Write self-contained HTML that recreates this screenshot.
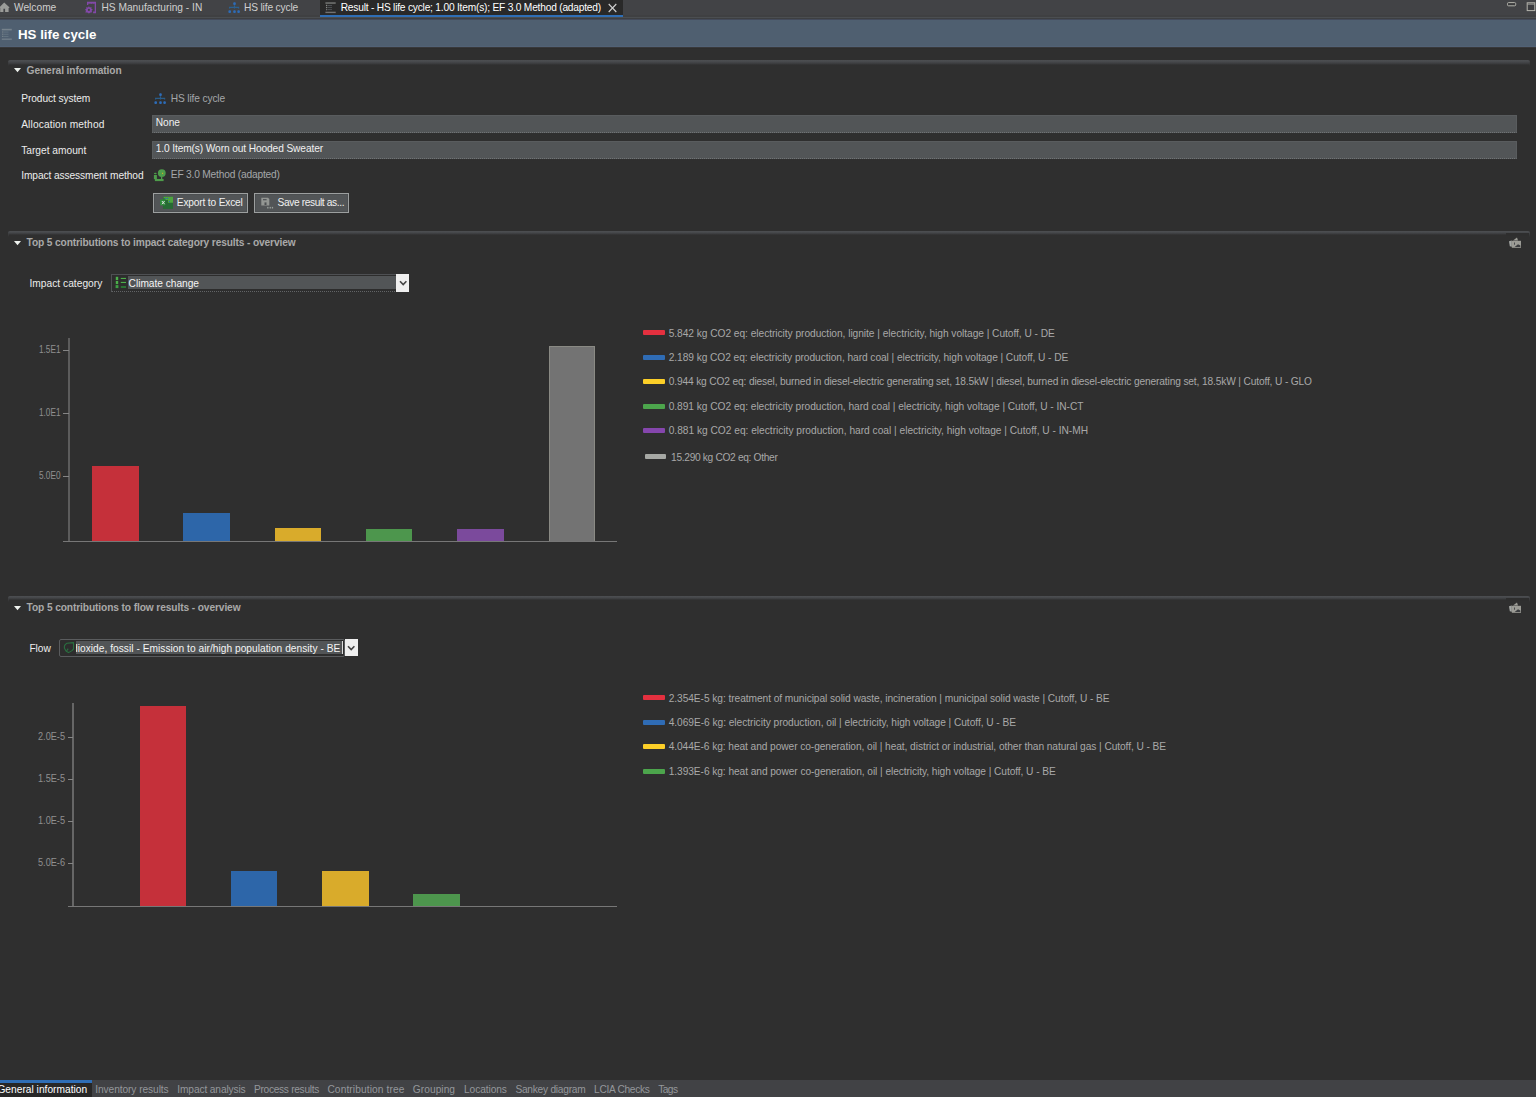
<!DOCTYPE html>
<html><head><meta charset="utf-8"><title>HS life cycle</title>
<style>
html,body{margin:0;padding:0;}
body{width:1536px;height:1097px;overflow:hidden;background:#2f2f2f;position:relative;font-family:"Liberation Sans",sans-serif;}
.a{position:absolute;}
.t{position:absolute;white-space:pre;line-height:1;font-family:"Liberation Sans",sans-serif;}
svg{position:absolute;overflow:visible;}
.secline{position:absolute;left:8px;width:1522px;height:4.6px;border-radius:2px 2px 0 0;background:linear-gradient(#4d4f52,#47494c 35%,#3b3c3e 72%,#2f2f2f);}
.inp{position:absolute;background:#525557;border:1px solid #595c5e;border-bottom:1px dotted #707375;box-sizing:border-box;}
.btn{position:absolute;background:#525557;border:1px solid #9c9f9f;box-sizing:border-box;box-shadow:inset 0 0 0 1px #4b4e50;}
.bar{position:absolute;}
.sw{position:absolute;height:5px;border-radius:1px;}
</style></head><body>
<!-- top tab bar -->
<div class="a" style="left:0;top:0;width:1536px;height:20px;background:#424346;"></div>
<div class="a" style="left:0;top:15px;width:1536px;height:2px;background:#3f4042;"></div>
<div class="a" style="left:0;top:17px;width:1536px;height:1px;background:#4b4e51;"></div>
<div class="a" style="left:0;top:18px;width:1536px;height:1px;background:#3d3f42;"></div>
<div class="a" style="left:0;top:19px;width:1536px;height:1px;background:#434a5a;"></div>
<div class="a" style="left:320px;top:0;width:303px;height:15px;background:#292929;"></div>
<div class="a" style="left:320px;top:15px;width:303px;height:2px;background:#2f6eb6;"></div>
<!-- header -->
<div class="a" style="left:0;top:20px;width:1536px;height:27px;background:#4f5f70;"></div>
<div class="a" style="left:0;top:46px;width:1536px;height:1px;background:#526276;"></div>
<div class="a" style="left:0;top:47px;width:1536px;height:1px;background:#38393b;"></div>
<div class="a" style="left:0;top:48px;width:1536px;height:1px;background:#2d2d2d;"></div>
<!-- sections -->
<div class="secline" style="top:60px;"></div>
<div class="secline" style="top:230.8px;"></div>
<div class="secline" style="top:595.8px;"></div>
<div class="a" style="left:1505.6px;top:233.2px;width:23.2px;height:3px;background:#2e2e2e;"></div>
<div class="a" style="left:1505.6px;top:598.2px;width:23.2px;height:3px;background:#2e2e2e;"></div>
<div class="a" style="left:7.6px;top:61px;width:1.2px;height:5px;background:linear-gradient(#45474a,#2f2f2f);"></div>
<div class="a" style="left:1528.8px;top:61px;width:1.2px;height:5px;background:linear-gradient(#45474a,#2f2f2f);"></div>
<div class="a" style="left:7.6px;top:232px;width:1.2px;height:5px;background:linear-gradient(#45474a,#2f2f2f);"></div>
<div class="a" style="left:1528.8px;top:232px;width:1.2px;height:5px;background:linear-gradient(#45474a,#2f2f2f);"></div>
<div class="a" style="left:7.6px;top:597px;width:1.2px;height:5px;background:linear-gradient(#45474a,#2f2f2f);"></div>
<div class="a" style="left:1528.8px;top:597px;width:1.2px;height:5px;background:linear-gradient(#45474a,#2f2f2f);"></div>
<svg style="left:14px;top:68px" width="7" height="5"><path d="M0 0H7L3.5 4.3Z" fill="#eef2ee"/></svg>
<svg style="left:14px;top:241px" width="7" height="5"><path d="M0 0H7L3.5 4.3Z" fill="#eef2ee"/></svg>
<svg style="left:14px;top:606px" width="7" height="5"><path d="M0 0H7L3.5 4.3Z" fill="#eef2ee"/></svg>
<!-- inputs -->
<div class="inp" style="left:152px;top:115px;width:1365px;height:17.7px;"></div>
<div class="inp" style="left:152px;top:141px;width:1365px;height:17.7px;"></div>
<div class="btn" style="left:153px;top:192.8px;width:94.9px;height:20px;"></div>
<div class="btn" style="left:253.6px;top:192.8px;width:95.6px;height:20px;"></div>
<!-- home -->
<svg style="left:0;top:0" width="12" height="16"><path d="M-0.6 7.4L4.2 2.4L9.6 7.4L8.6 7.9V12H5.1V8.8H3.4V12H0.2V7.9Z" fill="#9b9c99"/></svg>
<!-- process icon purple -->
<svg style="left:82px;top:0" width="16" height="16"><g fill="#8249a8"><path d="M5 1.8H14V13.2H11.1V11.4H12.7V3.8L11.9 3.4L11.2 3.9L10.4 3.4L9.6 3.9L8.8 3.4L8 3.9L7.2 3.4L6.3 3.8V4.9H5Z"/><path d="M6.9 6.2L7.9 7.4L9.5 7.1L9.4 8.7L10.8 9.5L9.6 10.7L10.2 12.2L8.6 12.4L6.9 13.4L5.2 12.4L3.3 12.4L4 10.8L3 9.5L4.4 8.7L4.3 7.1L5.9 7.4Z M6.9 8.8A1.1 1.1 0 1 0 6.9 11A1.1 1.1 0 1 0 6.9 8.8Z" fill-rule="evenodd"/></g></svg>
<!-- product system tab icon -->
<svg style="left:225px;top:0" width="16" height="16"><g fill="#2d6cb8"><rect x="8.2" y="2.2" width="2.6" height="2.8" rx="1"/><rect x="3.4" y="10.2" width="2.6" height="2.8" rx="1"/><rect x="8.2" y="10.2" width="2.6" height="2.8" rx="1"/><rect x="12.3" y="10.2" width="2.6" height="2.8" rx="1"/></g><path d="M4.6 8.6V7.4H13.6V8.6M9.5 5.2V8.4" stroke="#2b6090" stroke-width="1.2" fill="none"/></svg>
<!-- result tab icon -->
<svg style="left:322px;top:0" width="16" height="16"><rect x="3.4" y="2.2" width="10.3" height="1.7" fill="#6a6c6a"/><rect x="3.4" y="11.7" width="10.3" height="1.4" fill="#727272"/><g fill="#8a8b87"><rect x="4" y="4.8" width="1.2" height="1.3"/><rect x="4" y="6.9" width="1.2" height="1.3"/><rect x="4" y="9" width="1.2" height="1.3" fill="#6f6f6f"/></g><g fill="#4f5357"><rect x="5.6" y="5" width="4.4" height="0.9"/><rect x="5.6" y="7.1" width="4.4" height="0.9"/><rect x="5.6" y="9.2" width="4.4" height="0.9"/></g></svg>
<!-- close x -->
<svg style="left:608px;top:3px" width="10" height="10"><path d="M0.7 1L8.3 9M8.3 1L0.7 9" stroke="#cfcfcf" stroke-width="1.1" fill="none"/></svg>
<!-- min / max -->
<svg style="left:1506px;top:1px" width="12" height="8"><rect x="1.5" y="1.6" width="8.2" height="3.2" rx="1" fill="#3a3b3d" stroke="#b2b2ab" stroke-width="1"/></svg>
<svg style="left:1525px;top:1px" width="12" height="12"><rect x="2.2" y="1.8" width="7.6" height="7.8" fill="#3c3d40" stroke="#b6b6ae" stroke-width="1"/><rect x="2.2" y="2.6" width="7.6" height="1" fill="#a0a09a"/></svg>
<!-- header icon -->
<svg style="left:0;top:26px" width="16" height="16"><rect x="1.8" y="2.8" width="10" height="1.6" fill="#76828c"/><rect x="1.8" y="12.6" width="10" height="1.1" fill="#7a8690"/><g fill="#7e8a90"><rect x="2.2" y="5.4" width="1.2" height="1.2"/><rect x="2.2" y="7.6" width="1.2" height="1.2"/><rect x="2.2" y="9.8" width="1.2" height="1.2"/></g><g fill="#657583"><rect x="4" y="5.6" width="4.5" height="0.9"/><rect x="4" y="7.8" width="4.5" height="0.9"/><rect x="4" y="10" width="4.5" height="0.9"/></g></svg>
<!-- product system link icon -->
<svg style="left:151.4px;top:90.7px" width="16" height="16"><g fill="#2d6cb8"><rect x="8.2" y="2.2" width="2.6" height="2.8" rx="1"/><rect x="3.4" y="10.2" width="2.6" height="2.8" rx="1"/><rect x="8.2" y="10.2" width="2.6" height="2.8" rx="1"/><rect x="12.3" y="10.2" width="2.6" height="2.8" rx="1"/></g><path d="M4.6 8.6V7.4H13.6V8.6M9.5 5.2V8.4" stroke="#2a5c88" stroke-width="1.2" fill="none"/></svg>
<!-- EF method icon -->
<svg style="left:150px;top:166px" width="20" height="18"><g fill="#4e9c4b"><circle cx="11.8" cy="7.1" r="3.9"/><rect x="11" y="10.5" width="1.3" height="3"/><rect x="4.9" y="13" width="8.7" height="2.1"/><rect x="3.9" y="9" width="3" height="4.2"/><ellipse cx="5.3" cy="7.5" rx="1.4" ry="0.7"/></g><rect x="12" y="6.8" width="1.1" height="1.1" fill="#e0b020"/></svg>
<!-- excel icon -->
<svg style="left:156px;top:193px" width="22" height="20"><rect x="6.9" y="3.8" width="10.1" height="12.1" fill="#276a34"/><path d="M7.5 3.8H17V9.8H12V7H9.3V5.5H7.5Z" fill="#4da53f"/><rect x="4" y="6.4" width="5.1" height="6" fill="#2f8a3a"/><path d="M5.9 8L8.6 11.2M8.6 8L5.9 11.2" stroke="#d8e0dc" stroke-width="1"/><g fill="#2b62c0"><rect x="9" y="5" width="1" height="1"/><rect x="11" y="5" width="1" height="1"/><rect x="13" y="8" width="1" height="1"/></g></svg>
<!-- save icon -->
<svg style="left:256px;top:193px" width="22" height="20"><path d="M5.3 4.7H12L13.3 6V12.6H5.3Z" fill="#939693"/><rect x="7" y="6" width="3.6" height="1.3" fill="#54575a"/><rect x="8.5" y="9.4" width="2" height="2.6" fill="#4c4f52"/><g fill="#9aa09c"><rect x="11.2" y="13.9" width="1.3" height="1.6"/><rect x="13.6" y="13.9" width="1.3" height="1.6"/><rect x="15.8" y="13.9" width="1.3" height="1.6"/></g></svg>
<!-- export image icons -->
<svg style="left:1503px;top:232px" width="24" height="22"><path d="M6 9.2L8.8 8.6V14.8L6.8 14.2Z" fill="#a3a6a3"/><path d="M10 8.6L14 5.4L15 8.6Z" fill="#9c9c96"/><rect x="8.8" y="8.8" width="9.2" height="7" fill="#9b9b95"/><path d="M11.7 15L15 12.2L17.3 13.6V15Z" fill="#3a3c3f"/><rect x="11" y="10.5" width="1" height="2.2" fill="#4a4c4f"/></svg>
<svg style="left:1503px;top:597px" width="24" height="22"><path d="M6 9.2L8.8 8.6V14.8L6.8 14.2Z" fill="#a3a6a3"/><path d="M10 8.6L14 5.4L15 8.6Z" fill="#9c9c96"/><rect x="8.8" y="8.8" width="9.2" height="7" fill="#9b9b95"/><path d="M11.7 15L15 12.2L17.3 13.6V15Z" fill="#3a3c3f"/><rect x="11" y="10.5" width="1" height="2.2" fill="#4a4c4f"/></svg>

<!-- combo 1 -->
<div class="a" style="left:111px;top:274px;width:286px;height:18px;box-sizing:border-box;border:1px solid #4e5053;border-bottom:1px dotted #626466;background:#2d2d2d;"></div>
<div class="a" style="left:127.5px;top:276px;width:268px;height:13px;background:#525557;"></div>
<div class="a" style="left:396px;top:274px;width:13.4px;height:17.5px;background:#efefef;"></div>
<svg style="left:398.5px;top:279.5px" width="9" height="7"><path d="M1 1.2L4.2 4.6L7.4 1.2" fill="none" stroke="#444" stroke-width="1.6"/></svg>
<!-- combo 2 -->
<div class="a" style="left:59px;top:639px;width:286px;height:18px;box-sizing:border-box;border:1px solid #5a5c5e;border-radius:2px;background:#2d2d2d;"></div>
<div class="a" style="left:76px;top:641px;width:265.5px;height:13px;background:#525557;"></div>
<div class="a" style="left:341.7px;top:641px;width:1px;height:13px;background:#ddd;"></div>
<div class="a" style="left:345px;top:639px;width:13px;height:17px;background:#efefef;"></div>
<svg style="left:347.3px;top:644.5px" width="9" height="7"><path d="M1 1.2L4.2 4.6L7.4 1.2" fill="none" stroke="#444" stroke-width="1.6"/></svg>
<div class="a" style="left:76.3px;top:640px;width:266px;height:16px;overflow:hidden;">
<span class="t" id="flowtxt" style="left:-4.3px;top:4px;font-size:10.2px;color:#f4f4f4;letter-spacing:0.027px;">dioxide, fossil - Emission to air/high population density - BE</span>
</div>
<!-- list icon -->
<svg style="left:108px;top:272px" width="24" height="22"><g fill="#4caf4a"><rect x="7.8" y="4.8" width="2.4" height="3.2"/><rect x="7.8" y="8.9" width="2.4" height="3.2"/><rect x="7.6" y="13.1" width="2.8" height="3" fill="#3f9e44"/><rect x="12.8" y="5.9" width="5.2" height="1.1"/><rect x="12.8" y="9.9" width="5.2" height="1.1"/><rect x="12.8" y="14.2" width="5.2" height="1.6" fill="#2c8238"/></g></svg>
<!-- flow leaf icon -->
<svg style="left:56px;top:637px" width="24" height="22"><path d="M11 6.3L17.5 5.6V12L16 13.6L12.6 15.6L10.2 14.2L8.4 11.2V9L9.4 7.4Z" fill="none" stroke="#2a7040" stroke-width="1.1" stroke-linejoin="round"/><path d="M12.2 11.6L10.6 14" stroke="#2a7040" stroke-width="1.1"/></svg>

<!-- chart 1 -->
<div class="a" style="left:68px;top:338px;width:2px;height:203.5px;background:#5c5c5c;"></div>
<div class="a" style="left:63px;top:540.7px;width:554.2px;height:1px;background:#777;"></div>
<div class="a" style="left:63.2px;top:350px;width:5.5px;height:1px;background:#858585;"></div>
<div class="a" style="left:63.2px;top:413px;width:5.5px;height:1px;background:#858585;"></div>
<div class="a" style="left:63.2px;top:476.2px;width:5.5px;height:1px;background:#858585;"></div>
<div class="bar" style="left:92.2px;top:466.4px;width:46.5px;height:74.5px;background:#c5303a;"></div>
<div class="bar" style="left:183.4px;top:512.9px;width:46.6px;height:28px;background:#2d66a9;"></div>
<div class="bar" style="left:274.8px;top:528.4px;width:46.4px;height:12.5px;background:#d9ab2b;"></div>
<div class="bar" style="left:366px;top:529.1px;width:46.3px;height:11.8px;background:#4d964d;"></div>
<div class="bar" style="left:457.3px;top:529.1px;width:46.5px;height:11.8px;background:#7b4a9c;"></div>
<div class="bar" style="left:548.8px;top:346.3px;width:46.4px;height:194.6px;background:#737373;box-sizing:border-box;border:1px solid #8a8a84;border-bottom:none;"></div>
<!-- legend 1 swatches -->
<div class="sw" style="left:643px;top:330.2px;width:21.8px;background:#e4303f;"></div>
<div class="sw" style="left:643px;top:354.8px;width:21.8px;background:#2f6cb5;"></div>
<div class="sw" style="left:643px;top:379.3px;width:21.8px;background:#fccf28;"></div>
<div class="sw" style="left:643px;top:403.8px;width:21.8px;background:#4ca54c;"></div>
<div class="sw" style="left:643px;top:428.3px;width:21.8px;background:#8546ad;"></div>
<div class="sw" style="left:645px;top:454.3px;width:20.8px;background:#a6a8a4;"></div>
<!-- chart 2 -->
<div class="a" style="left:72.4px;top:703px;width:1.6px;height:203.3px;background:#666;"></div>
<div class="a" style="left:67.5px;top:905.5px;width:549.7px;height:1px;background:#777;"></div>
<div class="a" style="left:67.7px;top:737px;width:5.5px;height:1px;background:#858585;"></div>
<div class="a" style="left:67.7px;top:779px;width:5.5px;height:1px;background:#858585;"></div>
<div class="a" style="left:67.7px;top:821.3px;width:5.5px;height:1px;background:#858585;"></div>
<div class="a" style="left:67.7px;top:863.4px;width:5.5px;height:1px;background:#858585;"></div>
<div class="bar" style="left:139.5px;top:706.3px;width:46.4px;height:199.4px;background:#c5303a;"></div>
<div class="bar" style="left:230.9px;top:871px;width:46.4px;height:34.7px;background:#2d66a9;"></div>
<div class="bar" style="left:322.1px;top:871px;width:46.5px;height:34.7px;background:#d9ab2b;"></div>
<div class="bar" style="left:413.4px;top:893.7px;width:46.4px;height:12px;background:#4d964d;"></div>
<!-- legend 2 swatches -->
<div class="sw" style="left:643px;top:695.2px;width:21.8px;background:#e4303f;"></div>
<div class="sw" style="left:643px;top:719.8px;width:21.8px;background:#2f6cb5;"></div>
<div class="sw" style="left:643px;top:744.3px;width:21.8px;background:#fccf28;"></div>
<div class="sw" style="left:643px;top:768.8px;width:21.8px;background:#4ca54c;"></div>
<!-- bottom tabs -->
<div class="a" style="left:0;top:1080px;width:1536px;height:17px;background:#414245;"></div>
<div class="a" style="left:0;top:1080px;width:92px;height:17px;background:#272727;"></div>
<div class="a" style="left:0;top:1080px;width:92px;height:3px;background:#2f6eb6;"></div>
<span class="t" style="left:14.0px;top:3px;font-size:10.2px;color:#cfcfcf;letter-spacing:0.003px;">Welcome</span>
<span class="t" style="left:101.4px;top:3px;font-size:10.2px;color:#cfcfcf;letter-spacing:0.006px;">HS Manufacturing - IN</span>
<span class="t" style="left:244.0px;top:3px;font-size:10.2px;color:#cfcfcf;letter-spacing:-0.157px;">HS life cycle</span>
<span class="t" style="left:340.7px;top:3px;font-size:10.2px;color:#ffffff;letter-spacing:-0.207px;">Result - HS life cycle; 1.00 Item(s); EF 3.0 Method (adapted)</span>
<span class="t" style="left:18.0px;top:28px;font-size:13.3px;color:#ffffff;letter-spacing:-0.005px;font-weight:700;">HS life cycle</span>
<span class="t" style="left:26.6px;top:66px;font-size:10.2px;color:#a9a9a9;letter-spacing:-0.095px;font-weight:700;">General information</span>
<span class="t" style="left:26.6px;top:238px;font-size:10.2px;color:#a9a9a9;letter-spacing:-0.136px;font-weight:700;">Top 5 contributions to impact category results - overview</span>
<span class="t" style="left:26.6px;top:603px;font-size:10.2px;color:#a9a9a9;letter-spacing:-0.108px;font-weight:700;">Top 5 contributions to flow results - overview</span>
<span class="t" style="left:21.2px;top:94px;font-size:10.2px;color:#ececec;letter-spacing:-0.080px;">Product system</span>
<span class="t" style="left:21.2px;top:120px;font-size:10.2px;color:#ececec;letter-spacing:0.136px;">Allocation method</span>
<span class="t" style="left:21.2px;top:146px;font-size:10.2px;color:#ececec;letter-spacing:-0.002px;">Target amount</span>
<span class="t" style="left:21.2px;top:171px;font-size:10.2px;color:#ececec;letter-spacing:-0.095px;">Impact assessment method</span>
<span class="t" style="left:170.8px;top:94px;font-size:10.2px;color:#a4a7aa;letter-spacing:-0.142px;">HS life cycle</span>
<span class="t" style="left:170.8px;top:170px;font-size:10.2px;color:#a4a7aa;letter-spacing:-0.190px;">EF 3.0 Method (adapted)</span>
<span class="t" style="left:155.7px;top:118px;font-size:10.2px;color:#f0f0f0;letter-spacing:-0.015px;">None</span>
<span class="t" style="left:155.7px;top:144px;font-size:10.2px;color:#f0f0f0;letter-spacing:-0.117px;">1.0 Item(s) Worn out Hooded Sweater</span>
<span class="t" style="left:176.8px;top:198px;font-size:10.2px;color:#f0f0f0;letter-spacing:-0.174px;">Export to Excel</span>
<span class="t" style="left:277.5px;top:198px;font-size:10.2px;color:#f0f0f0;letter-spacing:-0.379px;">Save result as...</span>
<span class="t" style="left:29.4px;top:279px;font-size:10.2px;color:#ececec;letter-spacing:0.034px;">Impact category</span>
<span class="t" style="left:128.6px;top:279px;font-size:10.2px;color:#f4f4f4;letter-spacing:-0.028px;">Climate change</span>
<span class="t" style="left:29.4px;top:644px;font-size:10.2px;color:#ececec;letter-spacing:-0.004px;">Flow</span>
<span class="t" style="left:668.7px;top:329px;font-size:10.2px;color:#a8a8a8;letter-spacing:-0.042px;">5.842 kg CO2 eq: electricity production, lignite | electricity, high voltage | Cutoff, U - DE</span>
<span class="t" style="left:668.7px;top:353px;font-size:10.2px;color:#a8a8a8;letter-spacing:-0.060px;">2.189 kg CO2 eq: electricity production, hard coal | electricity, high voltage | Cutoff, U - DE</span>
<span class="t" style="left:668.7px;top:377px;font-size:10.2px;color:#a8a8a8;letter-spacing:-0.144px;">0.944 kg CO2 eq: diesel, burned in diesel-electric generating set, 18.5kW | diesel, burned in diesel-electric generating set, 18.5kW | Cutoff, U - GLO</span>
<span class="t" style="left:668.7px;top:402px;font-size:10.2px;color:#a8a8a8;letter-spacing:-0.036px;">0.891 kg CO2 eq: electricity production, hard coal | electricity, high voltage | Cutoff, U - IN-CT</span>
<span class="t" style="left:668.7px;top:426px;font-size:10.2px;color:#a8a8a8;letter-spacing:-0.012px;">0.881 kg CO2 eq: electricity production, hard coal | electricity, high voltage | Cutoff, U - IN-MH</span>
<span class="t" style="left:671.1px;top:453px;font-size:10.2px;color:#a8a8a8;letter-spacing:-0.324px;">15.290 kg CO2 eq: Other</span>
<span class="t" style="left:668.7px;top:694px;font-size:10.2px;color:#a8a8a8;letter-spacing:-0.064px;">2.354E-5 kg: treatment of municipal solid waste, incineration | municipal solid waste | Cutoff, U - BE</span>
<span class="t" style="left:668.7px;top:718px;font-size:10.2px;color:#a8a8a8;letter-spacing:-0.042px;">4.069E-6 kg: electricity production, oil | electricity, high voltage | Cutoff, U - BE</span>
<span class="t" style="left:668.7px;top:742px;font-size:10.2px;color:#a8a8a8;letter-spacing:-0.076px;">4.044E-6 kg: heat and power co-generation, oil | heat, district or industrial, other than natural gas | Cutoff, U - BE</span>
<span class="t" style="left:668.7px;top:767px;font-size:10.2px;color:#a8a8a8;letter-spacing:-0.070px;">1.393E-6 kg: heat and power co-generation, oil | electricity, high voltage | Cutoff, U - BE</span>
<span class="t" style="left:38.7px;top:345px;font-size:10.2px;color:#909090;letter-spacing:0.000px;transform:scaleX(0.8075);transform-origin:0 0;">1.5E1</span>
<span class="t" style="left:38.7px;top:408px;font-size:10.2px;color:#909090;letter-spacing:0.000px;transform:scaleX(0.8075);transform-origin:0 0;">1.0E1</span>
<span class="t" style="left:38.7px;top:471px;font-size:10.2px;color:#909090;letter-spacing:0.000px;transform:scaleX(0.8075);transform-origin:0 0;">5.0E0</span>
<span class="t" style="left:38.2px;top:732px;font-size:10.2px;color:#909090;letter-spacing:0.000px;transform:scaleX(0.8995);transform-origin:0 0;">2.0E-5</span>
<span class="t" style="left:38.2px;top:774px;font-size:10.2px;color:#909090;letter-spacing:0.000px;transform:scaleX(0.8995);transform-origin:0 0;">1.5E-5</span>
<span class="t" style="left:38.2px;top:816px;font-size:10.2px;color:#909090;letter-spacing:0.000px;transform:scaleX(0.8995);transform-origin:0 0;">1.0E-5</span>
<span class="t" style="left:38.2px;top:858px;font-size:10.2px;color:#909090;letter-spacing:0.000px;transform:scaleX(0.8995);transform-origin:0 0;">5.0E-6</span>
<span class="t" style="left:-2.6px;top:1085px;font-size:10.2px;color:#ffffff;letter-spacing:0.017px;">General information</span>
<span class="t" style="left:95.2px;top:1085px;font-size:10.2px;color:#94979b;letter-spacing:-0.079px;">Inventory results</span>
<span class="t" style="left:177.3px;top:1085px;font-size:10.2px;color:#94979b;letter-spacing:-0.128px;">Impact analysis</span>
<span class="t" style="left:254.0px;top:1085px;font-size:10.2px;color:#94979b;letter-spacing:-0.309px;">Process results</span>
<span class="t" style="left:327.4px;top:1085px;font-size:10.2px;color:#94979b;letter-spacing:0.110px;">Contribution tree</span>
<span class="t" style="left:412.8px;top:1085px;font-size:10.2px;color:#94979b;letter-spacing:0.047px;">Grouping</span>
<span class="t" style="left:464.0px;top:1085px;font-size:10.2px;color:#94979b;letter-spacing:-0.092px;">Locations</span>
<span class="t" style="left:515.4px;top:1085px;font-size:10.2px;color:#94979b;letter-spacing:-0.252px;">Sankey diagram</span>
<span class="t" style="left:594.1px;top:1085px;font-size:10.2px;color:#94979b;letter-spacing:-0.317px;">LCIA Checks</span>
<span class="t" style="left:658.2px;top:1085px;font-size:10.2px;color:#94979b;letter-spacing:-0.558px;">Tags</span>
</body></html>
